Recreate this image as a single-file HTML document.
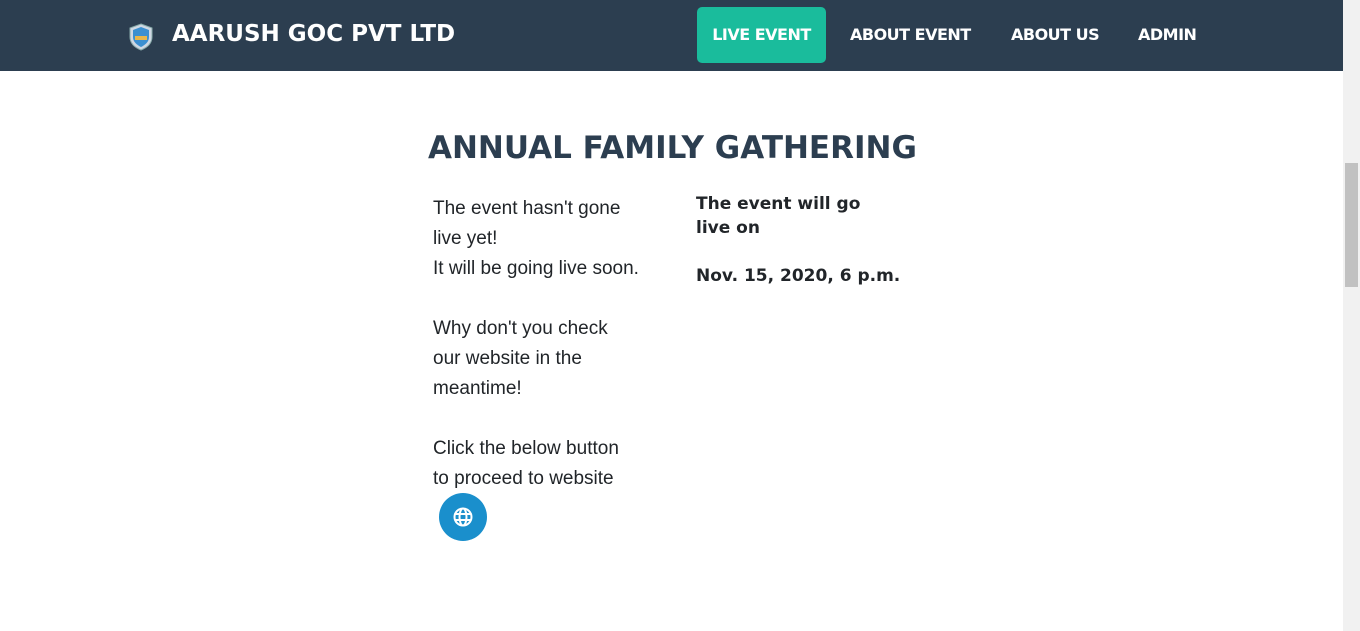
<!DOCTYPE html>
<html><head><meta charset="utf-8"><style>
body{margin:0;width:1360px;height:631px;overflow:hidden;background:#fff;font-family:"Liberation Sans",sans-serif;position:relative}
.nav{position:absolute;left:0;top:0;width:1343px;height:71px;background:#2c3e50}
.brand{position:absolute;left:172px;top:19px;color:#fff;font:bold 23px/30px "DejaVu Sans","Liberation Sans",sans-serif;letter-spacing:0px}
.logo{position:absolute;left:128px;top:23px}
.nav a{position:absolute;top:7px;height:56px;color:#fff;font:bold 16px/56px "DejaVu Sans","Liberation Sans",sans-serif;text-decoration:none;letter-spacing:-0.5px}
.live{left:697px;width:129px;text-align:center;background:#1abc9c;border-radius:5px}
.sb{position:absolute;left:1343px;top:0;width:17px;height:631px;background:#f1f1f1}
.thumb{position:absolute;left:1345px;top:163px;width:13px;height:124px;background:#c1c1c1}
h1{position:absolute;left:428px;top:130px;margin:0;font:bold 31px "DejaVu Sans","Liberation Sans",sans-serif;color:#2c3e50;letter-spacing:0px}
.left{position:absolute;left:433px;top:194px;width:260px;font-size:19px;line-height:30px;color:#212529}
.right{position:absolute;left:696px;top:192px;font:bold 17px/24px "DejaVu Sans","Liberation Sans",sans-serif;color:#212529}
.btn{position:absolute;left:439px;top:493px;width:48px;height:48px;border-radius:50%;background:#1a8fcc}
</style></head><body>
<div class="nav">
<svg class="logo" width="26" height="28" viewBox="0 0 26 28"><path d="M13 1L24 5V14C24 21 18 25 13 27C8 25 2 21 2 14V5Z" fill="#cfd8e3" stroke="#8aa" /><path d="M13 4L21 7V14C21 19 17 22 13 24C9 22 5 19 5 14V7Z" fill="#3b8fd0"/><rect x="7" y="13" width="12" height="4" fill="#e8b64a"/></svg>
<div class="brand">AARUSH GOC PVT LTD</div>
<a class="live">LIVE EVENT</a>
<a style="left:850px">ABOUT EVENT</a>
<a style="left:1011px">ABOUT US</a>
<a style="left:1138px">ADMIN</a>
</div>
<div class="sb"></div><div class="thumb"></div>
<h1>ANNUAL FAMILY GATHERING</h1>
<div class="left">The event hasn't gone<br>live yet!<br>It will be going live soon.<br><br>Why don't you check<br>our website in the<br>meantime!<br><br>Click the below button<br>to proceed to website</div>
<div class="right">The event will go<br>live on<br><br>Nov. 15, 2020, 6 p.m.</div>
<div class="btn"><svg width="48" height="48" viewBox="0 0 48 48"><g fill="none" stroke="#fff" stroke-width="2"><circle cx="24" cy="24" r="8.5"/><ellipse cx="24" cy="24" rx="3.5" ry="8.5"/><line x1="15.5" y1="21" x2="32.5" y2="21"/><line x1="15.5" y1="27" x2="32.5" y2="27"/></g></svg></div>
</body></html>
